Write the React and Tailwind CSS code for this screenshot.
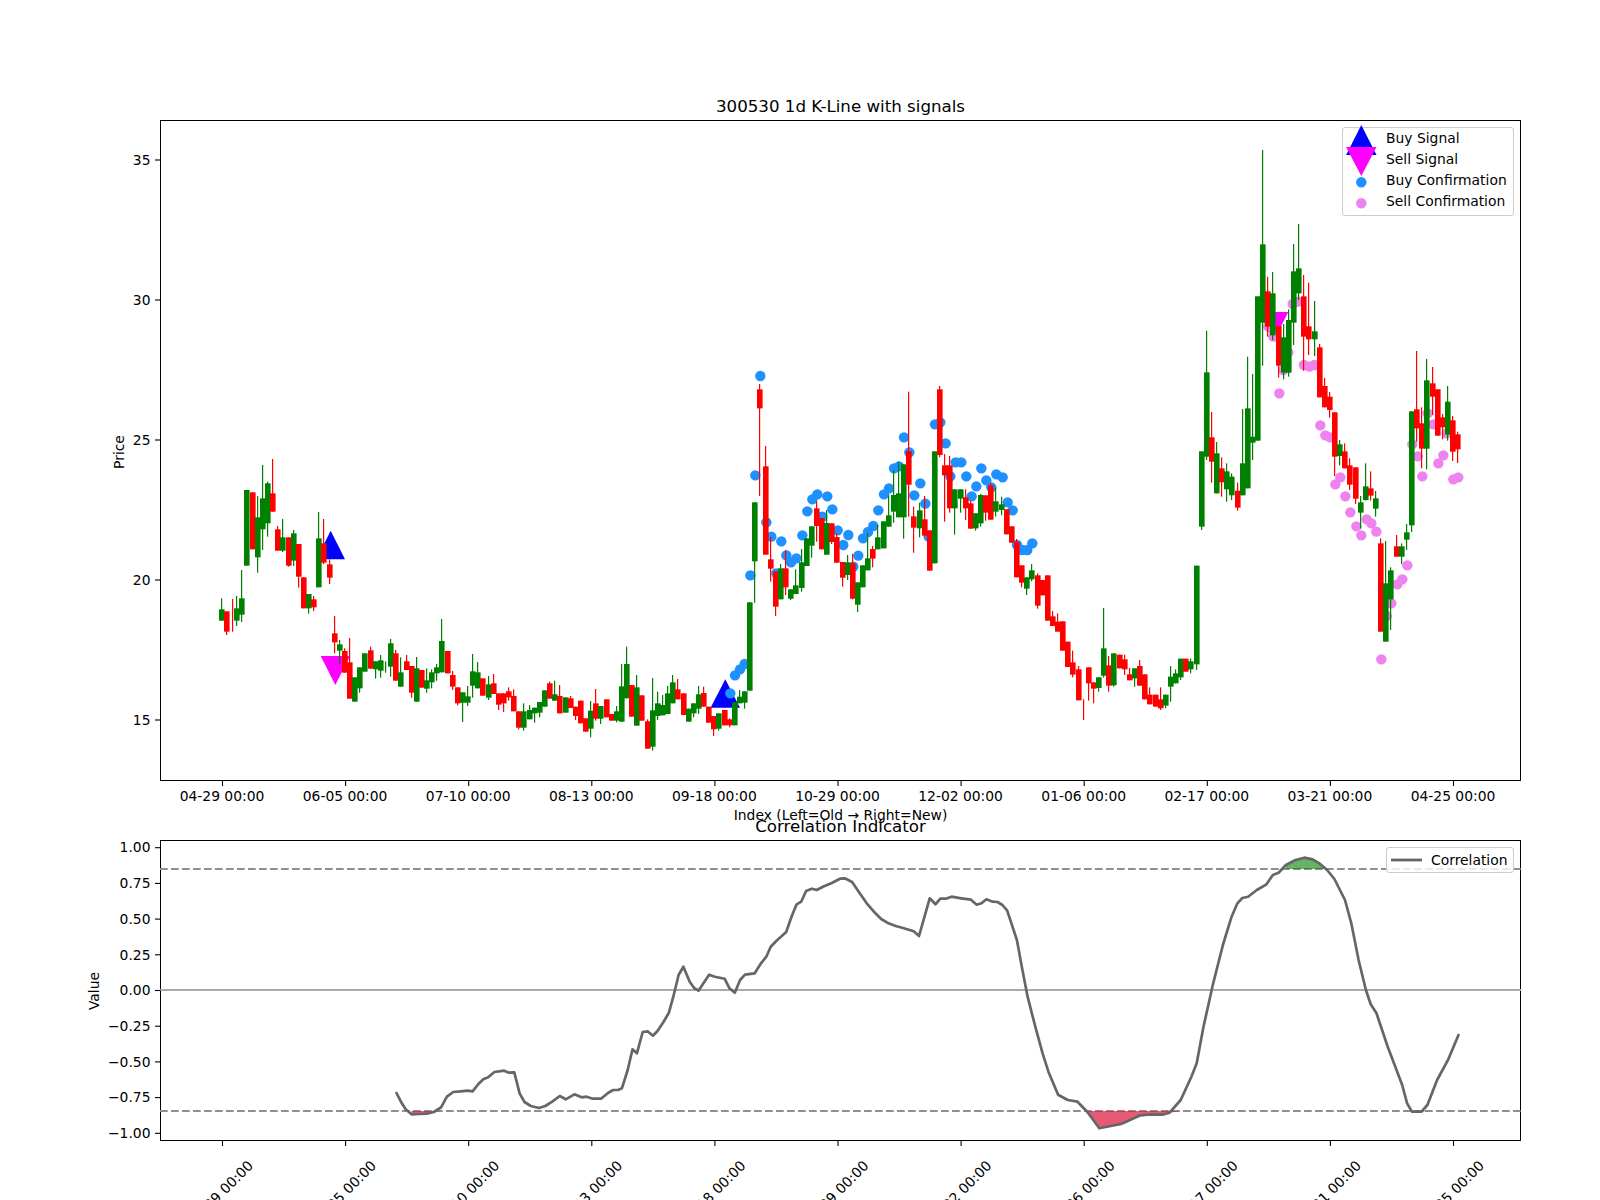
import React from "react";

const GREEN = "#008000";
const RED = "#ff0000";

// [x, colour, wickTop, bodyTop, bodyBottom, wickBottom], in crop pixels at 3x; each group has its crop origin
const GROUPS = [
  [200, 440, [
    [66,"g",475,508,542,542],[81,"r",514,514,575,585],[97,"r",477,477,477,575],[110,"g",468,505,542,558],[125,"g",390,475,524,546],
    [140,"g",150,150,377,377],[158,"r",157,157,328,328],[173,"g",168,232,352,398],[188,"g",75,175,268,330],[204,"g",125,130,250,290],
    [218,"r",57,160,215,215],[233,"r",258,268,332,332],[248,"g",237,292,332,336],[266,"r",292,292,377,380],[281,"g",270,280,362,378],
    [296,"r",312,312,410,443],[311,"r",412,412,505,505],[326,"g",462,462,505,521],[341,"r",468,478,502,513],[357,"g",216,295,442,442],
    [372,"r",237,310,368,372],[390,"r",358,373,413,432],[404,"r",528,580,607,640],[420,"g",600,613,632,670],[434,"r",625,633,698,698],
    [450,"r",594,667,776,776],[465,"g",712,712,785,785],[480,"g",682,682,745,758],[494,"g",640,640,695,695],[512,"r",620,631,686,686],
    [527,"g",664,664,688,716],[542,"g",645,661,692,713],[558,"g",664,664,664,698],[573,"g",597,610,680,710],[588,"r",630,640,722,722],
    [602,"g",652,697,740,740],[621,"r",645,664,690,690],[635,"r",678,678,758,773],[650,"g",651,685,785,785],[665,"r",690,690,743,743],
    [681,"g",685,721,746,758],[696,"g",688,697,727,745],[711,"g",672,682,700,722],[726,"g",537,603,697,697],[743,"r",633,633,700,700],
    [759,"r",693,705,740,750],[774,"r",742,742,790,796],[789,"g",757,757,788,846],[804,"g",738,769,788,798],[819,"g",642,694,737,773],
    [834,"g",666,697,745,745],[849,"r",715,715,767,767],[866,"g",708,733,773,780],[881,"r",702,730,762,762],[896,"r",760,760,794,810],
    [911,"r",760,760,790,816],[927,"r",742,754,772,782],[942,"r",748,768,814,814],[957,"r",814,814,863,868],[972,"g",790,814,863,872],
    [990,"g",795,810,838,838],[1005,"g",803,803,820,848],[1020,"g",786,786,818,832],[1035,"g",751,751,800,800],[1050,"r",725,730,776,776],
    [1065,"g",722,763,782,782],
  ]],
  [540, 360, [
    [60,"r",975,1008,1060,1060],[78,"g",1012,1012,1058,1058],[92,"r",1008,1015,1044,1044],[107,"r",1040,1040,1068,1080],[122,"r",1022,1022,1090,1090],
    [137,"r",1075,1075,1115,1115],[153,"g",1023,1052,1106,1132],[168,"r",987,1030,1076,1082],[183,"g",1038,1038,1076,1092],[200,"r",1018,1018,1072,1072],
    [214,"r",1062,1062,1082,1082],[230,"g",1038,1054,1082,1087],[246,"g",912,979,1085,1085],[261,"g",860,912,1015,1015],[276,"r",975,975,1070,1070],
    [291,"g",945,982,1097,1097],[306,"r",1006,1006,1082,1082],[323,"r",1078,1084,1166,1166],[339,"g",954,1051,1160,1172],[354,"g",995,1030,1068,1080],
    [369,"g",1005,1035,1066,1066],[384,"g",978,1000,1062,1062],[399,"g",945,967,1030,1030],[414,"r",957,988,1018,1018],[431,"r",1000,1000,1065,1065],
    [446,"g",1046,1046,1085,1085],[461,"g",1030,1030,1060,1072],[476,"g",978,1003,1046,1062],[491,"r",980,999,1040,1040],[507,"r",1040,1040,1088,1088],
    [521,"r",1068,1068,1108,1128],[536,"g",1060,1060,1106,1112],[554,"r",1050,1050,1096,1096],[569,"r",1075,1078,1096,1102],[585,"g",1027,1027,1096,1096],
    [600,"g",990,1010,1030,1030],[615,"g",994,994,1028,1046],[630,"g",727,727,992,992],[645,"g",427,427,604,728],[660,"r",72,88,145,408],
    [677,"r",258,319,584,584],[693,"r",530,598,626,665],[708,"r",634,634,740,768],[723,"g",612,625,718,718],[738,"r",570,625,682,705],
    [753,"g",688,688,716,720],[768,"g",628,676,702,702],[786,"g",567,607,684,695],[801,"g",535,535,618,618],[816,"g",499,499,557,593],
    [831,"r",423,445,498,545],[846,"r",474,474,568,568],[861,"g",450,489,584,584],[876,"r",490,490,546,552],[891,"r",520,531,608,608],
    [908,"r",606,606,653,680],[924,"g",585,607,645,660],[939,"r",582,610,716,718],[954,"g",667,667,734,756],[969,"g",616,616,682,682],
    [984,"g",518,595,631,631],[999,"r",558,567,596,622],[1014,"g",495,532,568,568],
  ]],
  [880, 360, [
    [12,"g",484,484,565,565],[27,"g",406,466,500,500],[42,"g",330,405,455,488],[57,"g",305,400,472,472],[72,"g",313,313,472,536],
    [87,"r",95,273,374,470],[102,"r",440,469,503,578],[120,"g",428,451,505,532],[135,"r",408,478,527,527],[150,"r",511,511,632,632],
    [165,"g",274,274,610,610],[180,"r",78,88,285,292],[195,"r",282,316,346,485],[210,"r",288,316,445,458],[225,"g",388,388,445,524],
    [242,"g",388,388,416,458],[258,"r",388,412,445,480],[273,"r",422,430,506,506],[288,"g",460,460,505,512],[303,"g",402,405,490,500],
    [318,"r",406,406,458,482],[333,"r",368,376,479,479],[348,"g",384,424,455,470],[366,"g",410,433,450,466],[381,"r",448,448,523,523],
    [396,"r",499,499,548,548],[411,"r",537,546,652,652],[426,"r",616,616,668,682],[441,"g",652,652,686,705],[456,"g",612,631,658,664],
    [473,"r",640,646,737,746],[489,"r",660,660,706,706],[504,"r",646,646,782,782],[519,"r",753,769,798,798],[534,"r",760,785,815,815],
    [549,"r",784,784,872,872],[564,"r",845,845,921,921],[579,"r",872,907,944,952],[597,"r",918,928,1021,1021],[612,"r",1018,1018,1018,1080],
    [627,"r",922,922,970,1022],[642,"r",967,967,986,1030],[657,"g",952,952,984,995],[672,"g",744,865,947,953],[687,"r",888,916,977,995],
    [702,"g",880,880,976,980],[720,"r",884,884,925,925],[735,"r",884,898,928,945],[750,"r",924,943,961,961],[765,"g",925,925,955,980],
    [780,"r",900,918,977,977],[795,"r",943,943,1018,1018],[810,"r",982,1004,1033,1033],[828,"r",1004,1004,1040,1040],[843,"r",982,1018,1045,1050],
    [858,"g",1004,1004,1037,1045],[873,"g",918,950,980,1025],[888,"g",928,940,970,970],[903,"g",896,896,952,960],[918,"r",896,896,935,935],
    [933,"g",895,904,928,940],[951,"g",617,617,913,930],
  ]],
  [1180, 380, [
    [66,"g",214,214,440,450],[81,"g",-148,-23,230,240],[96,"r",96,172,245,308],[111,"g",186,220,340,340],[126,"r",232,265,307,350],
    [141,"g",250,274,328,365],[156,"g",280,290,346,360],[173,"r",308,332,383,392],[188,"g",87,250,346,346],[204,"g",-70,85,325,325],
    [219,"g",-18,170,188,240],[234,"g",-251,-251,182,182],
  ]],
  [1180, 100, [
    [249,"g",150,433,668,797],[264,"r",530,574,680,710],[279,"g",516,580,706,720],[296,"r",678,678,797,833],[311,"g",672,712,818,838],
    [326,"g",628,660,818,830],[341,"g",432,514,668,735],[356,"g",372,505,580,600],[372,"r",525,589,710,812],[387,"r",548,679,718,765],
    [405,"g",603,694,718,768],[420,"r",732,742,892,892],[435,"r",834,858,922,922],
  ]],
  [1180, 380, [
    [450,"r",36,50,90,113],[465,"r",97,97,230,288],[480,"g",180,193,228,256],[495,"r",190,214,265,265],[510,"r",235,256,314,330],
    [528,"r",262,262,356,372],[543,"g",348,367,398,446],[558,"g",250,319,360,362],[573,"r",274,325,347,362],[588,"g",333,355,386,410],
    [603,"r",475,490,755,755],[618,"g",483,610,785,785],[633,"g",562,571,658,750],[651,"r",465,499,530,530],[666,"g",490,499,530,552],
    [681,"g",432,457,479,510],[696,"g",94,94,436,456],[711,"r",-87,88,145,185],[726,"r",82,130,206,265],[741,"g",-63,1,206,268],
    [759,"r",-39,10,50,105],[774,"r",28,28,167,167],[789,"r",102,112,142,178],[804,"g",18,65,164,182],[819,"r",108,121,215,243],
    [834,"r",155,163,208,249],
  ]],
];

const CANDLES = GROUPS.flatMap(([ox, oy, rows]) =>
  rows.map(([x, c, wt, bt, bb, wb]) => ({
    x: ox + x / 3,
    color: c === "g" ? GREEN : RED,
    wt: oy + wt / 3,
    bt: oy + bt / 3,
    bb: oy + bb / 3,
    wb: oy + wb / 3,
  }))
);

const toDots = (ox, oy, pts) => pts.map(([x, y]) => [ox + x / 3, oy + y / 3]);

const BLUE_DOTS = [
  ...toDots(540, 360, [[571,1000],[585,946],[600,928],[614,912],[631,646],[646,346],[661,48],[679,487],[694,530],[724,544],[709,640],[739,586],[753,607],[769,595],[787,526],[802,454],[817,418],[832,403],[847,470],[862,409],[877,448],[893,511],[910,555],[925,525],[940,620],[955,587],[969,535],[984,516],[1000,498],[1015,451]]),
  ...toDots(880, 360, [[12,403],[27,385],[42,325],[57,319],[72,232],[88,277],[103,406],[121,370],[136,431],[146,530],[165,193],[181,187],[197,250],[211,349],[227,307],[244,307],[259,349],[275,409],[289,379],[304,325],[319,361],[334,382],[349,343],[368,352],[383,427],[398,451],[411,555],[427,570],[442,570],[457,550]]),
];

const VIOLET_DOTS = [
  ...toDots(1180, 100, [[265,680],[280,710],[325,757],[310,810],[338,612],[355,605],[372,795],[388,800],[403,795]]),
  ...toDots(1180, 380, [[298,40],[421,136],[436,166],[450,172],[481,292],[466,313],[496,349],[511,397],[529,439],[544,466],[560,418],[574,430],[589,455],[604,838],[634,670],[620,708],[652,613],[667,598],[682,556],[697,193],[713,229],[727,289],[743,100],[760,133],[775,250],[790,226],[800,160],[820,298],[835,292]]),
];

const corrA = [[652,966],[662,995],[672,1018],[684,1033],[700,1032],[716,1031],[730,1026],[745,1012],[757,980],[770,966],[785,964],[800,962],[810,964],[822,942],[832,928],[842,922],[855,906],[875,902],[885,908],[896,907],[907,970],[917,996],[930,1008],[947,1014],[960,1008],[975,994],[990,978],[1002,988],[1020,973],[1035,982],[1045,980],[1058,986],[1075,986],[1090,968],[1100,960],[1110,960],[1118,955],[1130,900],[1140,838],[1149,850],[1161,786],[1171,784],[1182,797],[1192,782],[1204,755],[1215,728],[1224,680],[1235,615],[1245,590],[1258,635],[1267,654],[1276,662],[1298,614],[1310,620],[1330,626],[1340,655],[1351,668],[1362,630],[1372,614],[1392,610],[1405,580],[1416,560],[1425,530],[1437,512],[1457,486],[1468,440],[1478,404],[1488,395],[1498,363],[1510,356],[1520,360],[1535,349],[1550,340]];
const corrB = [[0,326],[10,325],[25,336],[40,368],[55,400],[70,425],[85,447],[100,460],[115,468],[130,474],[152,484],[163,498],[185,385],[197,403],[207,386],[218,386],[230,380],[250,385],[270,389],[282,404],[292,400],[302,388],[315,395],[325,396],[335,405],[345,422],[365,510],[375,590],[387,680],[403,770],[418,850],[430,905],[450,974],[470,990],[490,995],[510,1025],[535,1075],[580,1062],[620,1036],[640,1033],[665,1034],[680,1028],[703,990],[725,920],[736,880],[750,770],[770,640],[790,525],[808,440],[820,400],[830,384],[842,380],[860,360],[880,343],[893,315],[905,308],[920,285],[940,270],[958,263],[975,268],[990,281],[1005,300],[1020,327],[1042,390],[1055,460],[1070,570],[1085,660],[1095,703],[1107,730],[1130,830],[1160,945],[1170,1000],[1180,1025],[1200,1025],[1212,1005],[1232,930],[1255,868],[1277,792]];
const SX = 2.0632;
const CORR = [
  ...corrA.map(([x, y]) => [80 + x / SX, 770 + y / 3]),
  ...corrB.map(([x, y]) => [840 + x / SX, 770 + y / 3]),
];
const linePts = (pts) => pts.map(([x, y]) => `${x.toFixed(1)},${y.toFixed(1)}`).join(" ");

const UP = 869;
const DOWN = 1111;
function fillBeyond(level, isBeyond) {
  const polys = [];
  let cur = null;
  for (let i = 0; i < CORR.length; i++) {
    const p = CORR[i];
    const b = isBeyond(p[1]);
    if (b && !cur) cur = [[p[0], level]];
    if (b) cur.push(p);
    if (!b && cur) {
      cur.push([p[0], level]);
      polys.push(cur);
      cur = null;
    }
  }
  return polys;
}
const RED_FILL = fillBeyond(DOWN, (y) => y > DOWN);
const GREEN_FILL = fillBeyond(UP, (y) => y < UP);

const XTICKS = [222.5, 345.6, 468.7, 591.8, 714.9, 838, 961.1, 1084.2, 1207.3, 1330.4, 1453.5];
const TOP_LABELS = ["04-29 00:00","06-05 00:00","07-10 00:00","08-13 00:00","09-18 00:00","10-29 00:00","12-02 00:00","01-06 00:00","02-17 00:00","03-21 00:00","04-25 00:00"];
const PRICE = [[15,720],[20,580],[25,440],[30,300],[35,160]];
const VALUES = ["1.00","0.75","0.50","0.25","0.00","−0.25","−0.50","−0.75","−1.00"];

const FONT = "DejaVu Sans, sans-serif";

function TopChart() {
  return (
    <svg className="absolute -inset-px w-[1361px] h-[661px] overflow-visible" viewBox="160 120 1361 661" fontFamily={FONT} fontSize="13.89" fill="#000">
      <polygon points="330.7,530.7 345,559.3 316.4,559.3" fill="#0000ff" />
      <polygon points="725.3,679.3 740,707.7 710.6,707.7" fill="#0000ff" />
      <polygon points="320.7,656 350,656 335.3,685" fill="#ff00ff" />
      <polygon points="1259,312 1288.3,312 1273.6,340.7" fill="#ff00ff" />
      {BLUE_DOTS.map(([x, y], i) => <circle key={i} cx={x} cy={y} r="5.2" fill="#1e90ff" />)}
      {VIOLET_DOTS.map(([x, y], i) => <circle key={i} cx={x} cy={y} r="5.2" fill="#ee82ee" />)}
      {CANDLES.map((c, i) => (
        <g key={i} fill={c.color}>
          <rect x={Math.round(c.x - 0.6)} y={c.wt} width="1.2" height={Math.max(c.wb - c.wt, 0)} />
          {c.bb > c.bt && <rect x={Math.round(c.x - 2.8)} y={c.bt} width="5.6" height={c.bb - c.bt} />}
        </g>
      ))}
      {XTICKS.map((x, i) => (
        <g key={i}>
          <line x1={x} x2={x} y1="780.5" y2="786" stroke="#000" strokeWidth="1.1" />
          <text x={x - 0.5} y="796" textAnchor="middle" dominantBaseline="central">{TOP_LABELS[i]}</text>
        </g>
      ))}
      {PRICE.map(([p, y]) => (
        <g key={p}>
          <line x1="155" x2="160.5" y1={y} y2={y} stroke="#000" strokeWidth="1.1" />
          <text x="150.5" y={y} textAnchor="end" dominantBaseline="central">{p}</text>
        </g>
      ))}
      <text x="118.5" y="452" textAnchor="middle" dominantBaseline="central" transform="rotate(-90 118.5 452)">Price</text>
    </svg>
  );
}

function BottomChart() {
  return (
    <svg className="absolute -inset-px w-[1361px] h-[301px] overflow-visible" viewBox="160 840 1361 301" fontFamily={FONT} fontSize="13.89" fill="#000">
      <line x1="160" x2="1521" y1={UP} y2={UP} stroke="#8f8f8f" strokeWidth="2" strokeDasharray="7.7 3.3" />
      <line x1="160" x2="1521" y1={DOWN} y2={DOWN} stroke="#8f8f8f" strokeWidth="2" strokeDasharray="7.7 3.3" />
      <line x1="160" x2="1521" y1="990" y2="990" stroke="#aaaaaa" strokeWidth="2" />
      {RED_FILL.map((p, i) => <polygon key={i} points={linePts(p)} fill="#dc143c" fillOpacity="0.7" />)}
      {GREEN_FILL.map((p, i) => <polygon key={i} points={linePts(p)} fill="#008000" fillOpacity="0.6" />)}
      <polyline points={linePts(CORR)} fill="none" stroke="#666666" strokeWidth="2.7" strokeLinejoin="round" />
      {XTICKS.map((x, i) => (
        <g key={i}>
          <line x1={x} x2={x} y1="1140.5" y2="1146" stroke="#000" strokeWidth="1.1" />
          <text x={x - 2} y="1193" textAnchor="middle" dominantBaseline="central" transform={`rotate(-45 ${x - 2} 1193)`}>{TOP_LABELS[i]}</text>
        </g>
      ))}
      {VALUES.map((v, i) => {
        const y = 847.7 + i * 35.7;
        return (
          <g key={v}>
            <line x1="155" x2="160.5" y1={y} y2={y} stroke="#000" strokeWidth="1.1" />
            <text x="150.5" y={y - 0.3} textAnchor="end" dominantBaseline="central">{v}</text>
          </g>
        );
      })}
      <text x="94" y="991" textAnchor="middle" dominantBaseline="central" transform="rotate(-90 94 991)">Value</text>
    </svg>
  );
}

function PriceLegend() {
  return (
    <div className="absolute top-[6px] right-[6px] w-[172px] h-[89px] bg-white/80 border border-[#cccccc] rounded-[3px] pl-[43px] text-[13.89px] leading-[21px]">
      <div>Buy Signal</div>
      <div>Sell Signal</div>
      <div>Buy Confirmation</div>
      <div>Sell Confirmation</div>
      <svg className="absolute -left-px -top-px w-[172px] h-[89px] overflow-visible" viewBox="1342 127 172 89">
        <polygon points="1361.3,125 1376.5,155 1346.1,155" fill="#0000ff" />
        <polygon points="1346.1,147 1376.5,147 1361.3,176" fill="#ff00ff" />
        <circle cx="1361.3" cy="182.3" r="5.2" fill="#1e90ff" />
        <circle cx="1361.3" cy="203.3" r="5.2" fill="#ee82ee" />
      </svg>
    </div>
  );
}

function CorrLegend() {
  return (
    <div className="absolute top-[6px] right-[6px] w-[128px] h-[26px] bg-white/80 border border-[#cccccc] rounded-[3px] flex items-center pl-[4px] gap-[9px] text-[13.89px]">
      <svg className="w-[31px] h-[4px]" viewBox="0 0 31 4"><rect x="0" y="0.6" width="31" height="2.8" fill="#666666" /></svg>
      <span>Correlation</span>
    </div>
  );
}

export default function App() {
  return (
    <div className="w-[1600px] h-[1200px] bg-white overflow-hidden text-black font-['DejaVu_Sans',sans-serif] pt-[93px] pl-[160px]">
      <div className="w-[1361px]">
        <h2 className="h-[27px] leading-[28px] text-center text-[16.67px] font-normal">300530 1d K-Line with signals</h2>
        <div className="relative h-[661px] border border-black">
          <TopChart />
          <PriceLegend />
        </div>
        <div className="mt-[26px] h-[16px] leading-[16px] text-center text-[13.89px]">Index (Left=Old → Right=New)</div>
        <h2 className="mt-[-9px] h-[26px] leading-[26px] text-center text-[16.67px] font-normal">Correlation Indicator</h2>
        <div className="relative h-[301px] border border-black">
          <BottomChart />
          <CorrLegend />
        </div>
      </div>
    </div>
  );
}
